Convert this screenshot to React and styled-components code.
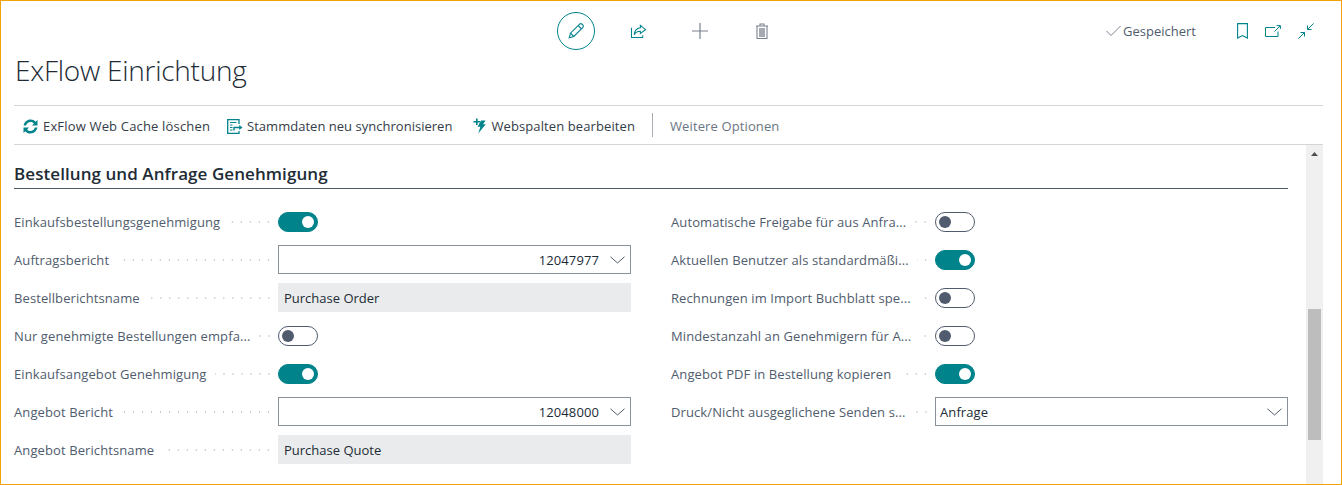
import React from 'react'
import styled, {createGlobalStyle} from "styled-components";

const teal = '#00838a';
const FONT = '"Open Sans", "Noto Sans", sans-serif';

const GlobalStyle = createGlobalStyle`
  html, body {
    margin: 0;
    padding: 0;
    background: #fff;
  }
  * {
    box-sizing: border-box;
  }
`;

const Frame = styled.div`
  width: 1342px;
  height: 485px;
  border: 1px solid #f0a30a;
  background: #fff;
  font-family: ${FONT};
  display: flex;
  flex-direction: column;
  overflow: hidden;
`;

const Header = styled.header`
  margin: 0 18px 0 13px;
  height: 105px;
  border-bottom: 1px solid #d5d5d8;
`;

const TopBar = styled.div`
  display: flex;
  align-items: center;
  height: 60px;
`;

const CenterActions = styled.div`
  display: flex;
  align-items: center;
  gap: 24px;
  margin-left: 543px;
`;

const RoundButton = styled.div`
  width: 38px;
  height: 38px;
  border-radius: 50%;
  border: 1px solid ${teal};
  display: flex;
  align-items: center;
  justify-content: center;
`;

const ActionIcon = styled.div`
  width: 38px;
  height: 38px;
  display: flex;
  align-items: center;
  justify-content: center;
`;

const RightActions = styled.div`
  display: flex;
  align-items: center;
  margin-left: auto;
  margin-right: 9px;
`;

const Saved = styled.div`
  display: flex;
  align-items: center;
  gap: 2px;
  font-size: 13px;
  color: #505c6d;
  margin-right: 41px;
`;

const RightIcons = styled.div`
  display: flex;
  align-items: center;
  gap: 17px;
`;

const Title = styled.h1`
  margin: -9px 0 0 1px;
  font-size: 28px;
  line-height: 36px;
  font-weight: 300;
  letter-spacing: -0.25px;
  color: #212b36;
`;

const Toolbar = styled.nav`
  margin: 0 18px 0 13px;
  height: 39px;
  border-bottom: 1px solid #d5d5d8;
  display: flex;
  align-items: center;
  padding: 2px 0 0 9px;
  font-size: 13px;
  color: #333c48;
`;

const ToolButton = styled.div`
  display: flex;
  align-items: center;
  gap: ${({$iconGap}) => $iconGap}px;
  margin-right: ${({$gap}) => $gap}px;
  letter-spacing: ${({$tracking}) => $tracking}px;
  white-space: nowrap;
`;

const ToolDivider = styled.div`
  width: 1px;
  height: 24px;
  background: #a9aeb5;
  margin: -2px 17px 0 0;
`;

const MoreOptions = styled.div`
  color: #6b7583;
  letter-spacing: 0.12px;
  white-space: nowrap;
`;

const ScrollArea = styled.div`
  flex: 1;
  display: flex;
  min-height: 0;
  margin-right: 18px;
`;

const Content = styled.main`
  flex: 1;
  padding: 16px 18px 0 13px;
  overflow: hidden;
`;

const SectionTitle = styled.h2`
  margin: 0;
  height: 28px;
  font-size: 17px;
  line-height: 25px;
  font-weight: 600;
  letter-spacing: 0.07px;
  color: #212b36;
  border-bottom: 1px solid #505c6d;
`;

const Columns = styled.div`
  display: grid;
  grid-template-columns: 617px 617px;
  column-gap: 40px;
  padding-top: 14px;
`;

const Column = styled.div`
  display: flex;
  flex-direction: column;
`;

const Row = styled.div`
  height: 38px;
  display: grid;
  grid-template-columns: 264px 1fr;
  align-items: center;
`;

const LabelCell = styled.div`
  display: flex;
  align-items: center;
  padding-right: 5px;
  min-width: 0;
`;

const Label = styled.span`
  font-size: 13px;
  letter-spacing: 0.1px;
  color: #505c6d;
  white-space: nowrap;
`;

const Leader = styled.span`
  flex: 1;
  height: 2px;
  margin-left: 8px;
  background-image: radial-gradient(circle, #c4c7cc 1px, transparent 1px);
  background-size: 9px 2px;
  background-position: right center;
`;

const ToggleTrack = styled.div`
  width: 40px;
  height: 20px;
  border-radius: 10px;
  display: flex;
  align-items: center;
  padding: 0 3px;
  justify-content: ${({$on}) => ($on ? 'flex-end' : 'flex-start')};
  background: ${({$on}) => ($on ? teal : '#fff')};
  border: 1px solid ${({$on}) => ($on ? teal : '#505c6d')};
`;

const ToggleKnob = styled.div`
  width: 12px;
  height: 12px;
  border-radius: 50%;
  background: ${({$on}) => ($on ? '#fff' : '#505c6d')};
`;

const SelectBox = styled.div`
  height: 29px;
  margin-top: -1px;
  border: 1px solid #8a919b;
  display: flex;
  align-items: center;
  padding: 1px 5px 0 4px;
  font-size: 13px;
  letter-spacing: 0.1px;
  color: #212b36;
`;

const SelectValue = styled.span`
  flex: 1;
  text-align: ${({$numeric}) => ($numeric ? 'right' : 'left')};
  padding-right: ${({$numeric}) => ($numeric ? 11 : 0)}px;
`;

const ReadOnlyBox = styled.div`
  height: 29px;
  margin-top: -1px;
  background: #eaebec;
  display: flex;
  align-items: center;
  padding: 1px 6px 0;
  font-size: 13px;
  color: #212b36;
`;

const ScrollTrack = styled.div`
  width: 17px;
  background: #f0f0f0;
  display: flex;
  flex-direction: column;
  align-items: center;
`;

const ScrollArrow = styled.div`
  display: flex;
  height: 4px;
  margin-top: 7px;
`;

const ScrollThumb = styled.div`
  width: 13px;
  height: 131px;
  margin-top: 153px;
  background: #bdbdbd;
`;

const PencilIcon = () => (
    <svg width="20" height="20" viewBox="0 0 20 20" fill="none" stroke={teal} strokeWidth="1.1">
        <path d="M3.2 16.8 L4.5 12.2 L13.6 3.1 Q14.6 2.1 15.8 3 L17 4.2 Q17.9 5.4 16.9 6.4 L7.8 15.5 Z"/>
        <path d="M12.2 4.5 L15.5 7.8 M4.5 12.2 L7.8 15.5"/>
    </svg>
);

const ShareIcon = () => (
    <svg width="17" height="15" viewBox="0 0 18 16" fill="none" stroke={teal} strokeWidth="1.1">
        <path d="M1.5 4 V14.5 H13.5 V12"/>
        <path d="M11 1.5 L16.5 6 L11 10 V7.8 Q6.5 7.6 4.5 11.5 Q4.8 4.8 11 4 Z"/>
    </svg>
);

const PlusIcon = () => (
    <svg width="18" height="18" viewBox="0 0 18 18" fill="none" stroke="#7a828e" strokeWidth="1.2">
        <path d="M9 1 V17 M1 9 H17"/>
    </svg>
);

const TrashIcon = () => (
    <svg width="14" height="17" viewBox="0 0 14 17" fill="none" stroke="#7a828e" strokeWidth="1.1">
        <path d="M1 3 H13 M5 3 V1 H9 V3"/>
        <path d="M2 3 V15.5 H12 V3"/>
        <rect x="4" y="5" width="6" height="9" fill="#a5aab2" stroke="none"/>
    </svg>
);

const CheckIcon = () => (
    <svg width="15" height="12" viewBox="0 0 15 12" fill="none" stroke="#7a828e" strokeWidth="1">
        <path d="M0.5 6 L5 10.5 L14.5 1"/>
    </svg>
);

const BookmarkIcon = () => (
    <svg width="11" height="16" viewBox="0 0 11 16" fill="none" stroke={teal} strokeWidth="1.1">
        <path d="M0.6 0.6 H10.4 V15 L5.5 12.5 L0.6 15 Z"/>
    </svg>
);

const PopoutIcon = () => (
    <svg width="16" height="12" viewBox="0 0 16 12" fill="none" stroke={teal} strokeWidth="1">
        <path d="M10 2.5 H0.5 V11.5 H13 V6.5"/>
        <path d="M9.5 6.5 L15 1 M11.5 0.6 H15.4 V4"/>
    </svg>
);

const CollapseIcon = () => (
    <svg width="16" height="16" viewBox="0 0 16 16" fill="none" stroke={teal} strokeWidth="1">
        <path d="M15.6 0.4 L9.5 6.5 M9.5 2.5 V6.5 H13.5"/>
        <path d="M0.4 15.6 L6.5 9.5 M2.5 9.5 H6.5 V13.5"/>
    </svg>
);

const RefreshIcon = () => (
    <svg width="15" height="15" viewBox="0 0 15 15" fill={teal}>
        <path d="M7.5 0.5 C9.6 0.5 11.4 1.4 12.6 2.8 L14.5 1 V6.4 H9 L10.9 4.5 C10 3.5 8.9 3 7.5 3 C5.4 3 3.7 4.4 3.1 6.4 H0.6 C1.2 3 4 0.5 7.5 0.5 Z"/>
        <path d="M7.5 14.5 C5.4 14.5 3.6 13.6 2.4 12.2 L0.5 14 V8.6 H6 L4.1 10.5 C5 11.5 6.1 12 7.5 12 C9.6 12 11.3 10.6 11.9 8.6 H14.4 C13.8 12 11 14.5 7.5 14.5 Z"/>
    </svg>
);

const SyncIcon = () => (
    <svg width="16" height="15" viewBox="0 0 16 15" fill="none" stroke={teal} strokeWidth="1.3">
        <path d="M12 5 V0.7 H0.7 V14.3 H12 V12"/>
        <path d="M3 3.5 H9.5 M3 6 H5.5 M3 8.5 H5.5 M3 11 H5.5" strokeWidth="1.1"/>
        <path d="M7 11.5 V8.5 H13" strokeWidth="1.4"/>
        <path d="M12.2 6 L15.5 8.5 L12.2 11 Z" fill={teal} stroke="none"/>
    </svg>
);

const BoltIcon = () => (
    <svg width="13" height="16" viewBox="0 0 13 16" fill={teal}>
        <path d="M0.5 3 H3 V0.5 H4.6 V3 H7 V4.6 H4.6 V7 H3 V4.6 H0.5 Z"/>
        <path d="M8 2.5 H12.5 L10 6.2 H12.8 L5.2 15.5 L7.4 8.8 H4.6 Z"/>
    </svg>
);

const Chevron = () => (
    <svg width="15" height="8" viewBox="0 0 15 8" fill="none" stroke="#505c6d" strokeWidth="1">
        <path d="M0.5 0.8 L7.5 7 L14.5 0.8"/>
    </svg>
);

const ArrowUp = () => (
    <svg width="7" height="4" viewBox="0 0 7 4" fill="#505050">
        <path d="M3.5 0 L7 4 H0 Z"/>
    </svg>
);

const Toggle = ({on}) => (
    <ToggleTrack $on={on}>
        <ToggleKnob $on={on}/>
    </ToggleTrack>
);

const Field = ({label, children}) => (
    <Row>
        <LabelCell>
            <Label>{label}</Label>
            <Leader/>
        </LabelCell>
        {children}
    </Row>
);

const Select = ({value, numeric}) => (
    <SelectBox>
        <SelectValue $numeric={numeric}>{value}</SelectValue>
        <Chevron/>
    </SelectBox>
);

const App = () => {
    return (
        <Frame>
            <GlobalStyle/>
            <Header>
                <TopBar>
                    <CenterActions>
                        <RoundButton><PencilIcon/></RoundButton>
                        <ActionIcon><ShareIcon/></ActionIcon>
                        <ActionIcon><PlusIcon/></ActionIcon>
                        <ActionIcon><TrashIcon/></ActionIcon>
                    </CenterActions>
                    <RightActions>
                        <Saved><CheckIcon/>Gespeichert</Saved>
                        <RightIcons>
                            <BookmarkIcon/>
                            <PopoutIcon/>
                            <CollapseIcon/>
                        </RightIcons>
                    </RightActions>
                </TopBar>
                <Title>ExFlow Einrichtung</Title>
            </Header>
            <Toolbar>
                <ToolButton $gap={17} $iconGap={5} $tracking={0.17}><RefreshIcon/>ExFlow Web Cache löschen</ToolButton>
                <ToolButton $gap={21} $iconGap={4} $tracking={0.02}><SyncIcon/>Stammdaten neu synchronisieren</ToolButton>
                <ToolButton $gap={17} $iconGap={5} $tracking={0.1}><BoltIcon/>Webspalten bearbeiten</ToolButton>
                <ToolDivider/>
                <MoreOptions>Weitere Optionen</MoreOptions>
            </Toolbar>
            <ScrollArea>
                <Content>
                    <SectionTitle>Bestellung und Anfrage Genehmigung</SectionTitle>
                    <Columns>
                        <Column>
                            <Field label="Einkaufsbestellungsgenehmigung"><Toggle on/></Field>
                            <Field label="Auftragsbericht"><Select value="12047977" numeric/></Field>
                            <Field label="Bestellberichtsname"><ReadOnlyBox>Purchase Order</ReadOnlyBox></Field>
                            <Field label="Nur genehmigte Bestellungen empfa..."><Toggle/></Field>
                            <Field label="Einkaufsangebot Genehmigung"><Toggle on/></Field>
                            <Field label="Angebot Bericht"><Select value="12048000" numeric/></Field>
                            <Field label="Angebot Berichtsname"><ReadOnlyBox>Purchase Quote</ReadOnlyBox></Field>
                        </Column>
                        <Column>
                            <Field label="Automatische Freigabe für aus Anfra..."><Toggle/></Field>
                            <Field label="Aktuellen Benutzer als standardmäßi..."><Toggle on/></Field>
                            <Field label="Rechnungen im Import Buchblatt spe..."><Toggle/></Field>
                            <Field label="Mindestanzahl an Genehmigern für A..."><Toggle/></Field>
                            <Field label="Angebot PDF in Bestellung kopieren"><Toggle on/></Field>
                            <Field label="Druck/Nicht ausgeglichene Senden s..."><Select value="Anfrage"/></Field>
                        </Column>
                    </Columns>
                </Content>
                <ScrollTrack>
                    <ScrollArrow><ArrowUp/></ScrollArrow>
                    <ScrollThumb/>
                </ScrollTrack>
            </ScrollArea>
        </Frame>
    )
}

export default App
